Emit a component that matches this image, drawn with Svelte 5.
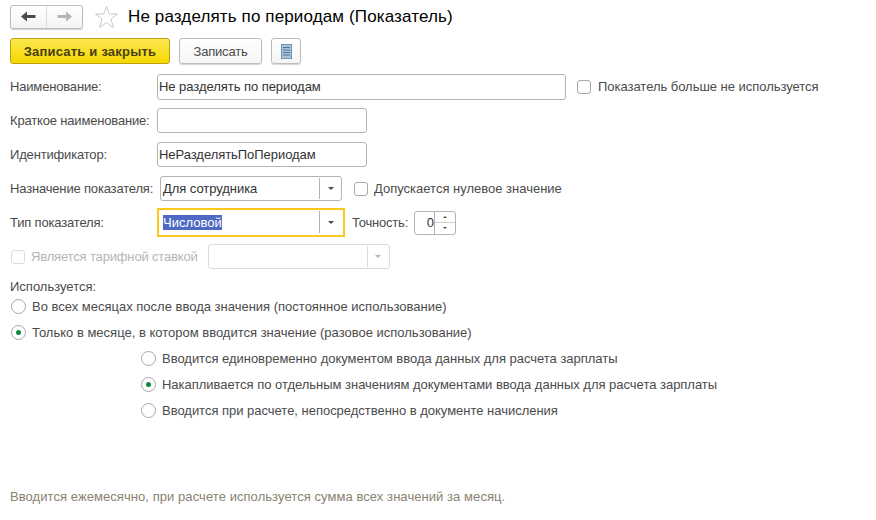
<script>
	const topRadios = [
		{ text: 'Во всех месяцах после ввода значения (постоянное использование)', on: false },
		{ text: 'Только в месяце, в котором вводится значение (разовое использование)', on: true }
	];
	const subRadios = [
		{ text: 'Вводится единовременно документом ввода данных для расчета зарплаты', on: false },
		{ text: 'Накапливается по отдельным значениям документами ввода данных для расчета зарплаты', on: true },
		{ text: 'Вводится при расчете, непосредственно в документе начисления', on: false }
	];
</script>

{#snippet arrow()}
	<span class="arrow-btn"><i></i></span>
{/snippet}

{#snippet radio(item)}
	<div class="radio-row">
		<span class="radio" class:on={item.on}></span>
		<span>{item.text}</span>
	</div>
{/snippet}

<div class="form">
	<!-- Header -->
	<div class="header">
		<div class="nav">
			<span class="nav-btn">
				<svg width="15" height="11" viewBox="0 0 15 11"><path d="M0 5.5 6 0.5V4H14.5V7H6V10.5Z" fill="#4a4a4a" /></svg>
			</span>
			<span class="nav-btn">
				<svg width="15" height="11" viewBox="0 0 15 11"><path d="M15 5.5 9 0.5V4H0.5V7H9V10.5Z" fill="#b4b4b4" /></svg>
			</span>
		</div>
		<svg class="star" width="25" height="24" viewBox="0 0 25 24">
			<path d="M12.5 1.5 15.4 9H23.5L17 14 19.4 22.5 12.5 17.5 5.6 22.5 8 14 1.5 9H9.6Z" fill="#fff" stroke="#c9c9c9" />
		</svg>
		<h1>Не разделять по периодам (Показатель)</h1>
	</div>

	<!-- Commands -->
	<div class="commands">
		<button class="primary">Записать и закрыть</button>
		<button class="plain">Записать</button>
		<button class="icon-btn" aria-label="Отчеты">
			<svg width="11" height="15" viewBox="0 0 11 15">
				<rect x="0.5" y="0.5" width="10" height="14" fill="#a9c3da" stroke="#6f93b3" />
				<path d="M2 3.5H9M2 6H9M2 8.5H9M2 11H9" stroke="#4f7698" />
			</svg>
		</button>
	</div>

	<!-- Fields -->
	<div class="row r-name">
		<label>Наименование:</label>
		<span class="input wide">Не разделять по периодам</span>
		<span class="check-label first"><span class="check"></span>Показатель больше не используется</span>
	</div>
	<div class="row r-short">
		<label>Краткое наименование:</label>
		<span class="input mid"></span>
	</div>
	<div class="row r-id">
		<label>Идентификатор:</label>
		<span class="input mid">НеРазделятьПоПериодам</span>
	</div>
	<div class="row r-purpose">
		<label class="purpose">Назначение показателя:</label>
		<span class="input select purpose-box">Для сотрудника{@render arrow()}</span>
		<span class="check-label second"><span class="check"></span>Допускается нулевое значение</span>
	</div>
	<div class="row r-type">
		<label>Тип показателя:</label>
		<span class="focus-frame"><span class="sel">Числовой</span>{@render arrow()}</span>
		<span class="precision">Точность:</span>
		<span class="spin">
			<span class="spin-value">0</span>
			<span class="spin-btns"><b class="up"></b><b class="down"></b></span>
		</span>
	</div>
	<div class="row r-rate disabled">
		<span class="check-label rate"><span class="check"></span>Является тарифной ставкой</span>
		<span class="input select rate-box">{@render arrow()}</span>
	</div>

	<!-- Usage -->
	<div class="used">Используется:</div>
	{#each topRadios as item}
		{@render radio(item)}
	{/each}
	<div class="sub">
		{#each subRadios as item}
			{@render radio(item)}
		{/each}
	</div>

	<div class="footer">Вводится ежемесячно, при расчете используется сумма всех значений за месяц.</div>
</div>

<style>
	:global(body) {
		margin: 0;
		background: #fff;
	}
	.form {
		width: 876px;
		height: 520px;
		box-sizing: border-box;
		padding: 4px 0 0 10px;
		font-family: "Liberation Sans", Arial, sans-serif;
		font-size: 13px;
		color: #4b4b4b;
		overflow: hidden;
	}

	/* --- Header --- */
	.header {
		display: flex;
		align-items: center;
		height: 25px;
	}
	.nav {
		display: flex;
		width: 73px;
		height: 24px;
		box-sizing: border-box;
		border: 1px solid #bdbdbd;
		border-radius: 3px;
		box-shadow: 0 1px 1px #d0d0d0;
		background: linear-gradient(#fff, #f3f3f3);
	}
	.nav-btn {
		flex: 1;
		display: flex;
		align-items: center;
		justify-content: center;
	}
	.nav-btn + .nav-btn {
		border-left: 1px solid #d9d9d9;
	}
	.star {
		margin-left: 11px;
	}
	h1 {
		margin: 0 0 0 9px;
		font-size: 17px;
		font-weight: 400;
		letter-spacing: 0.13px;
		color: #000;
	}

	/* --- Commands --- */
	.commands {
		display: flex;
		gap: 9px;
		margin-top: 9px;
		height: 26px;
	}
	button {
		box-sizing: border-box;
		height: 26px;
		padding: 0;
		font: inherit;
		border-radius: 3px;
		color: #4b4b4b;
	}
	.primary {
		width: 160px;
		font-weight: 700;
		letter-spacing: 0.2px;
		color: #4a3f10;
		border: 1px solid #b9a20c;
		background: linear-gradient(#fbe650, #f7d800);
	}
	.plain,
	.icon-btn {
		border: 1px solid #bdbdbd;
		background: linear-gradient(#fff, #f5f5f5);
		box-shadow: 0 1px 1px #d8d8d8;
	}
	.plain {
		width: 83px;
		letter-spacing: -0.2px;
	}
	.icon-btn {
		width: 30px;
		display: flex;
		align-items: center;
		justify-content: center;
	}

	/* --- Field rows --- */
	.row {
		display: flex;
		align-items: center;
	}
	.r-name { margin-top: 10px; height: 26px; }
	.r-short { margin-top: 8px; height: 25px; }
	.r-id { margin-top: 9px; height: 25px; }
	.r-purpose { margin-top: 9px; height: 25px; }
	.r-type { margin-top: 7px; height: 29px; }
	.r-rate { margin-top: 7px; height: 25px; }

	.r-name label,
	.r-name .input,
	.r-name .check-label {
		padding-bottom: 1px;
	}
	.r-name .check {
		margin-top: 1px;
	}

	label {
		width: 147px;
		flex: none;
		letter-spacing: -0.17px;
	}
	label.purpose {
		width: 150px;
	}
	.input {
		box-sizing: border-box;
		height: 100%;
		display: flex;
		align-items: center;
		position: relative;
		padding-left: 1px;
		border: 1px solid #b3b3b3;
		border-radius: 3px;
		background: #fff;
		color: #333;
		letter-spacing: -0.05px;
	}
	.select {
		padding-left: 2px;
	}
	.wide { width: 409px; }
	.mid { width: 210px; }
	.purpose-box { width: 182px; }
	.rate-box {
		width: 182px;
		margin-left: 10px;
	}
	.arrow-btn {
		position: absolute;
		right: 0;
		top: 1px;
		bottom: 1px;
		width: 21px;
		display: flex;
		align-items: center;
		justify-content: center;
		border-left: 1px solid #b3b3b3;
	}
	.arrow-btn i {
		border-left: 3px solid transparent;
		border-right: 3px solid transparent;
		border-top: 3px solid #4b4b4b;
	}

	.check-label {
		display: flex;
		align-items: center;
		gap: 6px;
	}
	.check {
		box-sizing: border-box;
		width: 14px;
		height: 14px;
		border: 1px solid #a8a8a8;
		border-radius: 3px;
		background: #fff;
	}
	.first { margin-left: 11px; gap: 7px; letter-spacing: -0.03px; }
	.second { margin-left: 12px; }
	.rate { margin-left: 1px; letter-spacing: -0.16px; }

	.focus-frame {
		box-sizing: border-box;
		width: 188px;
		height: 29px;
		position: relative;
		display: flex;
		align-items: center;
		padding-left: 4px;
		border: 2px solid #fbc91b;
		color: #fff;
	}
	.focus-frame .arrow-btn {
		right: 2px;
		top: 1px;
		bottom: 2px;
		width: 21px;
	}
	.sel {
		background: #4e69c4;
		line-height: 15px;
		height: 15px;
	}
	.precision {
		margin-left: 7px;
		letter-spacing: -0.2px;
	}
	.spin {
		box-sizing: border-box;
		width: 42px;
		height: 24px;
		margin-left: 6px;
		display: flex;
		border: 1px solid #b3b3b3;
		border-radius: 3px;
	}
	.spin-value {
		flex: 1;
		text-align: right;
		line-height: 22px;
		color: #333;
	}
	.spin-btns {
		width: 20px;
		display: flex;
		flex-direction: column;
		border-left: 1px solid #b3b3b3;
	}
	.spin-btns b {
		flex: 1;
		display: flex;
		align-items: center;
		justify-content: center;
	}
	.spin-btns b::after {
		content: '';
		border-left: 2px solid transparent;
		border-right: 2px solid transparent;
	}
	.up::after { border-bottom: 2px solid #4b4b4b; }
	.down { border-top: 1px solid #d0d0d0; }
	.down::after { border-top: 2px solid #4b4b4b; }

	.disabled,
	.disabled .input {
		color: #b5b5b5;
	}
	.disabled .check,
	.disabled .input,
	.disabled .arrow-btn {
		border-color: #dcdcdc;
	}
	.disabled .arrow-btn i {
		border-top-color: #b5b5b5;
	}

	/* --- Usage --- */
	.used {
		margin-top: 11px;
		height: 12px;
		line-height: 14px;
	}
	.radio-row {
		display: flex;
		align-items: center;
		gap: 6px;
		height: 26px;
		margin-left: 1px;
	}
	.used + .radio-row {
		margin-top: 1px;
	}
	.radio {
		box-sizing: border-box;
		width: 15px;
		height: 15px;
		border: 1px solid #a8a8a8;
		border-radius: 50%;
		display: flex;
		align-items: center;
		justify-content: center;
	}
	.radio.on::after {
		content: '';
		width: 5px;
		height: 5px;
		border-radius: 50%;
		background: #0f8a3c;
	}
	.sub {
		margin-left: 130px;
		letter-spacing: -0.02px;
	}
	.footer {
		margin-top: 66px;
		color: #8a8270;
		letter-spacing: 0.065px;
	}
</style>
